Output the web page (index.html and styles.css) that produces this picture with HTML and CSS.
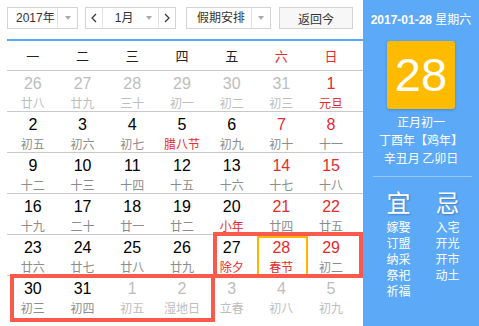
FILE: index.html
```html
<!DOCTYPE html>
<html lang="zh-CN">
<head>
<meta charset="utf-8">
<title>万年历</title>
<link rel="stylesheet" href="styles.css">
</head>
<body>
<div class="page">
  <div class="main">
    <div class="bar">
      <div class="sel year"><span class="sel-text">2017年</span><span class="sel-arrow"><i class="tri"></i></span></div>
      <div class="sel month">
        <span class="nav"><svg width="6" height="10" viewBox="0 0 6 10"><path d="M5 1 L1 5 L5 9" fill="none" stroke="#333" stroke-width="1.2"/></svg></span>
        <span class="sel-text m">1月</span><span class="sel-arrow m"><i class="tri"></i></span>
        <span class="nav r"><svg width="6" height="10" viewBox="0 0 6 10"><path d="M1 1 L5 5 L1 9" fill="none" stroke="#333" stroke-width="1.2"/></svg></span>
      </div>
      <div class="sel holiday"><span class="sel-text">假期安排</span><span class="sel-arrow"><i class="tri"></i></span></div>
      <div class="btn">返回今</div>
    </div>
    <div class="cal">
      <div class="row head">
        <div>一</div><div>二</div><div>三</div><div>四</div><div>五</div><div class="red">六</div><div class="red">日</div>
      </div>
      <div class="row">
        <div class="cell other"><b>26</b><span>廿八</span></div>
        <div class="cell other"><b>27</b><span>廿九</span></div>
        <div class="cell other"><b>28</b><span>三十</span></div>
        <div class="cell other"><b>29</b><span>初一</span></div>
        <div class="cell other"><b>30</b><span>初二</span></div>
        <div class="cell other"><b>31</b><span>初三</span></div>
        <div class="cell we"><b>1</b><span class="fest">元旦</span></div>
      </div>
      <div class="row">
        <div class="cell"><b>2</b><span>初五</span></div>
        <div class="cell"><b>3</b><span>初六</span></div>
        <div class="cell"><b>4</b><span>初七</span></div>
        <div class="cell"><b>5</b><span class="fest">腊八节</span></div>
        <div class="cell"><b>6</b><span>初九</span></div>
        <div class="cell we"><b>7</b><span>初十</span></div>
        <div class="cell we"><b>8</b><span>十一</span></div>
      </div>
      <div class="row">
        <div class="cell"><b>9</b><span>十二</span></div>
        <div class="cell"><b>10</b><span>十三</span></div>
        <div class="cell"><b>11</b><span>十四</span></div>
        <div class="cell"><b>12</b><span>十五</span></div>
        <div class="cell"><b>13</b><span>十六</span></div>
        <div class="cell we"><b>14</b><span>十七</span></div>
        <div class="cell we"><b>15</b><span>十八</span></div>
      </div>
      <div class="row">
        <div class="cell"><b>16</b><span>十九</span></div>
        <div class="cell"><b>17</b><span>二十</span></div>
        <div class="cell"><b>18</b><span>廿一</span></div>
        <div class="cell"><b>19</b><span>廿二</span></div>
        <div class="cell"><b>20</b><span class="fest">小年</span></div>
        <div class="cell we"><b>21</b><span>廿四</span></div>
        <div class="cell we"><b>22</b><span>廿五</span></div>
      </div>
      <div class="row">
        <div class="cell"><b>23</b><span>廿六</span></div>
        <div class="cell"><b>24</b><span>廿七</span></div>
        <div class="cell"><b>25</b><span>廿八</span></div>
        <div class="cell"><b>26</b><span>廿九</span></div>
        <div class="cell"><b>27</b><span class="fest">除夕</span></div>
        <div class="cell we sel-day"><b>28</b><span class="fest">春节</span></div>
        <div class="cell we"><b>29</b><span>初二</span></div>
      </div>
      <div class="row last">
        <div class="cell"><b>30</b><span>初三</span></div>
        <div class="cell"><b>31</b><span>初四</span></div>
        <div class="cell other"><b>1</b><span>初五</span></div>
        <div class="cell other"><b>2</b><span>湿地日</span></div>
        <div class="cell other"><b>3</b><span>立春</span></div>
        <div class="cell other"><b>4</b><span>初八</span></div>
        <div class="cell other"><b>5</b><span>初九</span></div>
      </div>
    </div>
  </div>
  <div class="side">
    <div class="today"><b>2017-01-28</b> 星期六</div>
    <div class="bigday">28</div>
    <div class="lunar">
      <div>正月初一</div>
      <div>丁酉年【鸡年】</div>
      <div>辛丑月 乙卯日</div>
    </div>
    <div class="divider"></div>
    <div class="yiji">
      <div class="col">
        <div class="big">宜</div>
        <div>嫁娶</div><div>订盟</div><div>纳采</div><div>祭祀</div><div>祈福</div>
      </div>
      <div class="col">
        <div class="big">忌</div>
        <div>入宅</div><div>开光</div><div>开市</div><div>动土</div>
      </div>
    </div>
  </div>
  <div class="mark mark1"></div>
  <div class="mark mark2"></div>
</div>
</body>
</html>
```

FILE: styles.css
```css
* { box-sizing: border-box; }
html, body { margin: 0; padding: 0; background: #fff; }
body {
  font-family: "Liberation Sans", Arial, "Noto Sans CJK SC", sans-serif;
  color: #000;
}
.page {
  position: relative;
  display: flex;
  width: 479px;
  height: 326px;
  overflow: hidden;
}
.main { width: 363px; flex: none; }

/* top bar */
.bar {
  display: flex;
  height: 22px;
  margin: 7px 0 0 7px;
  font-size: 12px;
  color: #333;
}
.sel {
  display: flex;
  height: 22px;
  border: 1px solid #d3d3d3;
  background: #fff;
  align-items: stretch;
}
.sel-text { display: flex; align-items: center; line-height: 20px; }
.sel-arrow {
  display: flex; align-items: center; justify-content: center;
  border-left: 1px solid #e2e2e2;
}
.tri {
  display: block; width: 0; height: 0;
  border-left: 3.5px solid transparent;
  border-right: 3.5px solid transparent;
  border-top: 4px solid #aaa;
}
.year { width: 71px; }
.year .sel-text { width: 49px; padding-left: 8px; }
.year .sel-arrow { width: 20px; }
.month { width: 91px; margin-left: 7px; }
.nav { width: 17px; display: flex; align-items: center; justify-content: center; border-right: 1px solid #e2e2e2; }
.nav.r { border-right: none; border-left: 1px solid #e2e2e2; }
.month .sel-text.m { width: 38px; padding-left: 12px; }
.month .sel-arrow.m { width: 18px; border-left: none; }
.holiday { width: 85px; margin-left: 10px; }
.holiday .sel-text { width: 64px; padding-left: 10px; }
.holiday .sel-arrow { width: 19px; }
.btn {
  width: 74px; height: 22px; margin-left: 8px;
  border: 1px solid #d3d3d3; background: #f7f7f7;
  display: flex; align-items: center; justify-content: center;
  font-family: "Noto Sans CJK SC", sans-serif;
}
.sel-text, .holiday .sel-text { font-family: "Liberation Sans", "Noto Sans CJK SC", sans-serif; }

/* calendar */
.cal {
  margin: 10px 0 0 7px;
  width: 356px;
  border-top: 2px solid #5aa8f8;
}
.row {
  display: grid;
  grid-template-columns: repeat(7, 49.71px);
  padding-left: 1px;
  border-bottom: 1px solid #c9c9c9;
  height: 41px;
}
.row.last { border-bottom: none; height: 40px; }
.row.head {
  height: 30px;
  font-size: 13px;
  font-family: "Noto Sans CJK SC", sans-serif;
  color: #222;
}
.row.head div { display: flex; align-items: center; justify-content: center; }
.red { color: #e52b2b; }
.cell {
  position: relative;
  display: flex; flex-direction: column; align-items: center;
  padding-top: 4px;
}
.cell b {
  font-weight: normal;
  font-size: 16px;
  line-height: 18px;
  color: #000;
}
.cell span {
  font-family: "Noto Sans CJK SC", sans-serif;
  font-size: 12px;
  line-height: 16px;
  margin-top: 2px;
  color: #8c8c8c;
}
.cell.we b { color: #e52b2b; }
.cell span.fest { color: #e52b2b; }
.cell.other b, .cell.other span { color: #bdbdbd; }
.sel-day::after {
  content: "";
  position: absolute;
  left: 0; top: 1px;
  width: 47px; height: 38px;
  border: 2px solid #ffb400;
}

/* side panel */
.side {
  width: 116px;
  flex: none;
  background: #5ca9f8;
  color: #fff;
  display: flex;
  flex-direction: column;
  align-items: center;
  font-family: "Liberation Sans", "Noto Sans CJK SC", sans-serif;
}
.today {
  margin-top: 12px;
  font-size: 12px;
  line-height: 16px;
  white-space: nowrap;
}
.today b { font-weight: bold; }
.bigday {
  margin-top: 13px;
  width: 68px; height: 68px;
  background: #ffbb00;
  border-radius: 3px;
  box-shadow: 0 1px 3px rgba(0,0,0,0.2);
  display: flex; align-items: center; justify-content: center;
  font-size: 47px;
  line-height: 1;
  padding-bottom: 2px;
}
.lunar {
  margin-top: 4px;
  font-family: "Noto Sans CJK SC", sans-serif;
  font-size: 12px;
  line-height: 18px;
  text-align: center;
}
.divider {
  margin-top: 9px;
  align-self: stretch;
  margin-left: 10px;
  margin-right: 7px;
  height: 1px;
  background: rgba(255,255,255,0.35);
}
.yiji {
  align-self: stretch;
  display: flex;
  padding-left: 11px;
  margin-top: 11px;
  font-family: "Noto Sans CJK SC", sans-serif;
  font-size: 12px;
  line-height: 16px;
}
.col { width: 49px; display: flex; flex-direction: column; align-items: center; }
.col .big {
  font-size: 24px;
  line-height: 28px;
  margin-bottom: 3px;
  text-shadow: 1px 1px 2px rgba(0,0,0,0.25);
}

/* annotation marks */
.mark {
  position: absolute;
  border: 4px solid #fa5a4c;
}
.mark1 { left: 213px; top: 232px; width: 150px; height: 46px; }
.mark2 { left: 10px; top: 274px; width: 205px; height: 48px; }
```
